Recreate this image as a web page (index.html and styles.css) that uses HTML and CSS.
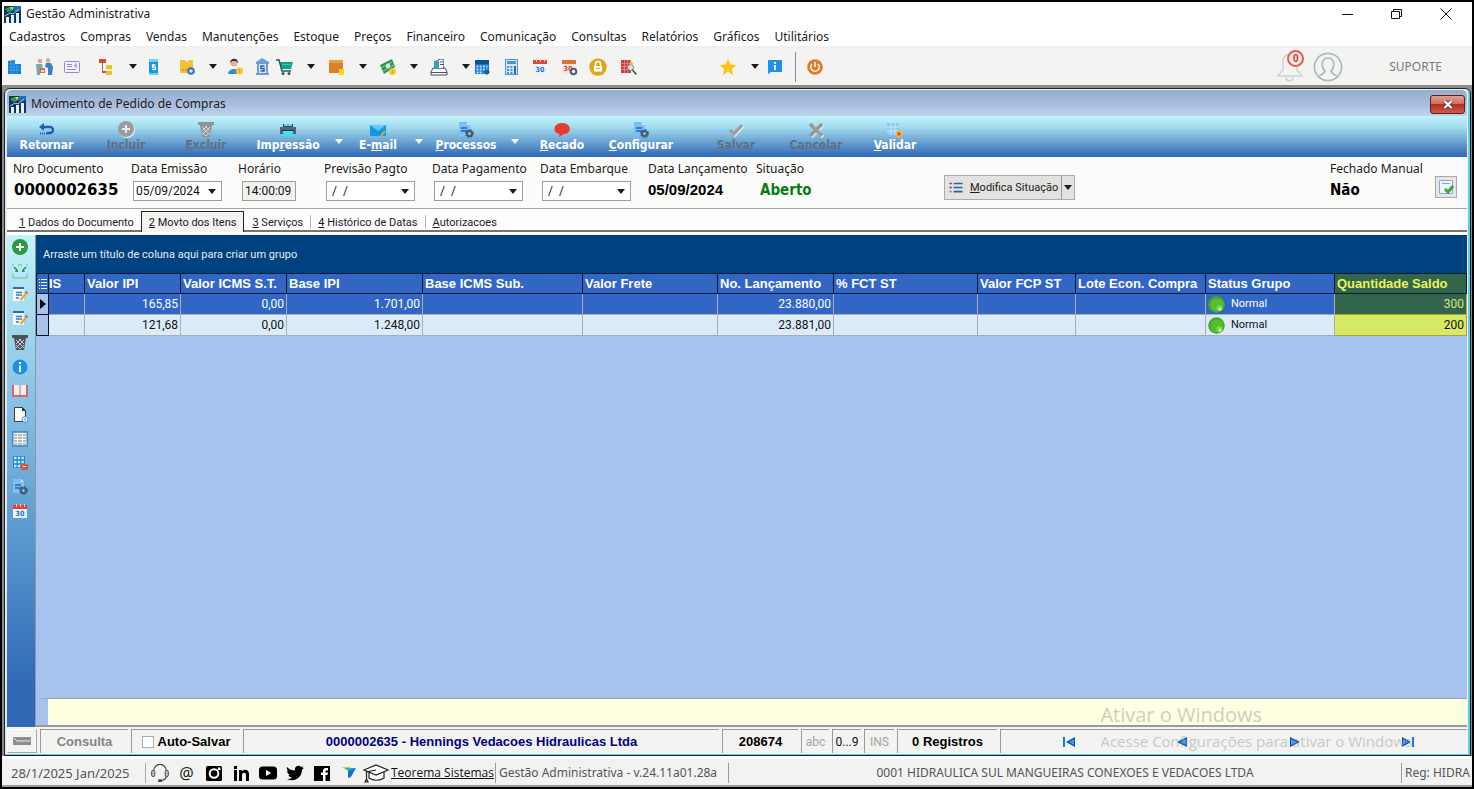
FILE: index.html
```html
<!DOCTYPE html>
<html lang="pt-BR">
<head>
<meta charset="utf-8">
<title>Gestão Administrativa</title>
<link rel="stylesheet" href="styles.css">
</head>
<body>
<svg class="defs" aria-hidden="true">
  <symbol id="logo" viewBox="0 0 17 17"><path fill="#12335c" d="M0 0h17v17H0z"/><path fill="#2f9e3c" d="M1 3l4-2 5 1-2 3-4 1z"/><path fill="#d8e34a" d="M6 1l4 0-2 3z"/><path fill="#1c6fb8" d="M10 0h7v4l-4 2-4-1z"/><path fill="#e8f2fa" d="M2 11h3v6H2zM7 9h3v8H7zM12 7h3v10h-3z"/><path fill="none" stroke="#9fd0f0" d="M1 10l5-3 3 1 6-5"/></symbol>
  <symbol id="caret" viewBox="0 0 8 5"><path fill="currentColor" d="M0 0h8L4 5z"/></symbol>
  <symbol id="docgear" viewBox="0 0 16 16"><path fill="#7cc0f7" d="M1 0h8l3 3v11H1z"/><path fill="#d5ecfd" d="M9 0l3 3H9z"/><path stroke="#1b66b5" stroke-width="1.4" d="M3 6h6M3 9h6"/><circle cx="11.5" cy="11.5" r="2.6" fill="none" stroke="#47596a" stroke-width="2"/><circle cx="11.5" cy="11.5" r="3.8" fill="none" stroke="#47596a" stroke-width="1.4" stroke-dasharray="1.5 1.5"/></symbol>
  <symbol id="note" viewBox="0 0 16 16"><path fill="#f1f8fd" d="M1 1h11v13H1z"/><path fill="#2c6da8" d="M1 0h11v2H1z"/><path stroke="#3f7fb5" stroke-width="1.6" d="M4 5.500h6M4 8h6M4 11h3"/><path stroke="#e8a93a" stroke-width="2.400" d="M14.500 6l-6 7"/><path fill="#c8553d" d="M13 5.500l1.500-1.500 1.500 1.300-1.300 1.700z"/></symbol>
  <symbol id="bin" viewBox="0 0 16 16"><path fill="currentColor" d="M0 0h16v3H0z"/><path fill="currentColor" d="M2 3h12l-2 12H4z"/><path stroke="#dfe6ea" stroke-width=".8" d="M4 5l8 8M12 5l-8 8M7 4l5 5M9 4L4 9M8 14l4-4M8 14L4 10"/></symbol>
  <symbol id="ball" viewBox="0 0 17 17"><circle cx="8.500" cy="8.500" r="8.300" fill="#45a92c"/><circle cx="9" cy="9" r="6.500" fill="#56bd31"/><circle cx="11.500" cy="12" r="3" fill="#7fd653"/><circle cx="12" cy="13" r="1.500" fill="#c9f5a4"/></symbol>
  <symbol id="play" viewBox="0 0 12 10"><path fill="#0a4fae" d="M1 0l10 5-10 5z"/><path fill="#3c9df0" d="M2 2l6 3-6 3z"/></symbol>
</svg>

<div class="app">
  <header class="titlebar">
    <svg class="logo"><use href="#logo"/></svg>
    <h1 class="app-name">Gestão Administrativa</h1>
    <div class="window-controls">
      <button aria-label="Minimizar"><svg viewBox="0 0 12 12"><path stroke="#111" d="M0 6.500h11"/></svg></button>
      <button aria-label="Restaurar"><svg viewBox="0 0 12 12"><path fill="none" stroke="#111" d="M.5 3.500h8v7h-8zM2.500 3.500v-2h8v7h-2"/></svg></button>
      <button aria-label="Fechar"><svg viewBox="0 0 12 12"><path stroke="#111" d="M.5.5l11 11M11.500.5l-11 11"/></svg></button>
    </div>
  </header>

  <nav class="menu">
    <a href="#">Cadastros</a><a href="#">Compras</a><a href="#">Vendas</a><a href="#">Manutenções</a><a href="#">Estoque</a><a href="#">Preços</a><a href="#">Financeiro</a><a href="#">Comunicação</a><a href="#">Consultas</a><a href="#">Relatórios</a><a href="#">Gráficos</a><a href="#">Utilitários</a>
  </nav>

  <div class="toolbar">
    <div class="tools">
      <button aria-label="Empresas"><svg viewBox="0 0 18 18"><path fill="#1579d4" d="M3 3l7-1v4h6v10H3z"/><path stroke="#4cb7f4" stroke-width=".7" d="M3 6h7M3 9h13M3 12h13M6 3v13M9 3v13M12 6v10"/></svg></button>
      <button aria-label="Clientes"><svg viewBox="0 0 18 18"><circle cx="5" cy="3" r="2.300" fill="#d9a98a"/><circle cx="13" cy="2.500" r="2.300" fill="#d9a98a"/><path fill="#79a8a0" d="M1 6h6l1 3-2 1-1 7H2z"/><path fill="#3f80c4" d="M11 5h5l2 4-1 8h-4V10l-3-1z"/><path fill="#d66a4a" d="M5 10h5v5H5z"/><path fill="#f5d9c8" d="M6 12h3v2H6z"/></svg></button>
      <button aria-label="Condições"><svg viewBox="0 0 18 18"><rect x="1.500" y="3.500" width="15" height="11" rx="1" fill="#f4f2fd" stroke="#8f8ad2"/><path stroke="#8f8ad2" d="M4 6.500h5M4 8.500h5M4 11.500h9M13 5v5M11 7.500h3"/></svg></button>
      <button aria-label="Hierarquia"><svg viewBox="0 0 18 18"><path fill="#d84a32" d="M2 1h7v4H2z"/><path fill="#f2c01c" d="M9 7h6v4H9zM9 13h6v4H9z"/><path fill="none" stroke="#777" d="M5.500 5v9.500H9"/><path stroke="#d84a32" stroke-width="2" d="M5 14h4"/></svg></button>
      <button class="drop" aria-label="Mais opções"><svg><use href="#caret"/></svg></button>
      <button aria-label="Tabela de preço"><svg viewBox="0 0 18 18"><path fill="#1596e0" d="M5 1h9v16H5z"/><path fill="#6cd0f7" d="M5 1h9v3H5zM5 15h9v2H5z"/><path fill="none" stroke="#fff" stroke-width="1.300" d="M11.500 7h-3v2.200h3v2.300h-3.500"/></svg></button>
      <button aria-label="Produtos"><svg viewBox="0 0 18 18"><path fill="#f2c232" d="M2 2h5l2 2 2-2h4v13H2z"/><path stroke="#b48316" d="M4 12h2M7 12h2"/><circle cx="13" cy="13" r="2.800" fill="#dbe8f5" stroke="#3f6fa8" stroke-width="2"/></svg></button>
      <button class="drop" aria-label="Mais opções"><svg><use href="#caret"/></svg></button>
      <button aria-label="Vendedor"><svg viewBox="0 0 18 18"><circle cx="8" cy="5" r="3.500" fill="#e9b088"/><path fill="#2b2b2b" d="M4 5c0-5 8-6 8 0l-2-2H6z"/><path fill="#2f8ad8" d="M2 16c0-6 12-7 12 0z"/><circle cx="13.500" cy="13" r="3.500" fill="#f6c637"/><path stroke="#e0a622" d="M13.500 11v4"/></svg></button>
      <button aria-label="Banco"><svg viewBox="0 0 18 18"><path fill="#6f9ddb" d="M9 0l7 4v2h-1v9h1v2H3v-2h1V6H3V4z"/><path fill="#d8e8fb" d="M6 6h7v9H6z"/><path fill="none" stroke="#2a5fb5" stroke-width="1.500" d="M11.500 8H8v2.500h3V13H7.500"/></svg></button>
      <button aria-label="Compras"><svg viewBox="0 0 18 18"><path fill="#16a08c" d="M3 4h14l-2 7H6z"/><path fill="none" stroke="#27585c" stroke-width="1.500" d="M0 2h3l3 11h9"/><path stroke="#3fbfae" d="M6 6.500h9"/><circle cx="7" cy="15.500" r="1.500" fill="#27585c"/><circle cx="13" cy="15.500" r="1.500" fill="#27585c"/></svg></button>
      <button class="drop" aria-label="Mais opções"><svg><use href="#caret"/></svg></button>
      <button aria-label="Estoque"><svg viewBox="0 0 18 18"><path fill="#dc7f2c" d="M2 2h14v13H2z"/><path fill="#f0a04c" d="M2 2h14v3H2z"/><path fill="#fbd324" d="M12 11h5v6h-5z"/></svg></button>
      <button class="drop" aria-label="Mais opções"><svg><use href="#caret"/></svg></button>
      <button aria-label="Financeiro"><svg viewBox="0 0 18 18"><path fill="#2d9650" d="M1 7l12-6 3 8-11 7z"/><path stroke="#8fd0a2" stroke-width="1" d="M2 10l11-6M4 13l11-6"/><circle cx="9" cy="8" r="2.400" fill="#c9ecd2"/><circle cx="13.500" cy="13.500" r="3.500" fill="#f6c637"/><path stroke="#e0a622" d="M13.500 12v3"/></svg></button>
      <button class="drop" aria-label="Mais opções"><svg><use href="#caret"/></svg></button>
      <button aria-label="Nota fiscal"><svg viewBox="0 0 18 18"><path fill="#f8fafc" stroke="#3d4a5c" d="M3 10l-2 4v3h16v-3l-2-4z"/><path fill="#2c9fd4" d="M4 3l4-1v9H4z"/><path fill="#fff" stroke="#4b5261" stroke-dasharray="2 1" d="M8.500 1.500h5v9h-5z"/><path stroke="#4b5261" d="M10 4h3M10 6.500h3M1 14.500h16"/></svg></button>
      <button class="drop" aria-label="Mais opções"><svg><use href="#caret"/></svg></button>
      <button aria-label="Agenda"><svg viewBox="0 0 18 18"><path fill="#1c75cc" d="M2 2h14v14H2z"/><path fill="#0c4f9b" d="M2 2h14v4H2z"/><path stroke="#bfe2fb" stroke-width="2" stroke-dasharray="2 1.200" d="M3.500 8.500h11M3.500 11.500h11M3.500 14.500h7"/><path fill="#0e6a9c" d="M10 14l4-3 3 3-3 3z"/></svg></button>
      <button aria-label="Calculadora"><svg viewBox="0 0 18 18"><rect x="3.500" y="1.500" width="12" height="15" fill="#cfe8f8" stroke="#4c97cb"/><path fill="#4c97cb" d="M5 3h9v3H5z"/><path stroke="#4c97cb" stroke-width="2" stroke-dasharray="2 1.500" d="M5 9h6M5 12h6M5 15h6"/><path fill="#1f6ab0" d="M12 8h2v8h-2z"/></svg></button>
      <button aria-label="Calendário"><svg viewBox="0 0 18 18"><path fill="#e9f2fc" d="M2 6h14v10H2z"/><path fill="#e0433a" d="M2 2h14v4H2z"/><path fill="#f7c2bd" d="M5 1h1v3H5zM9 1h1v3H9zM13 1h1v3h-1z"/><text x="9" y="14" text-anchor="middle" class="cal-num" fill="#1f6fcc">30</text></svg></button>
      <button aria-label="Configurar calendário"><svg viewBox="0 0 18 18"><path fill="#f4e8e2" d="M2 6h14v10H2z"/><path fill="#de7034" d="M2 2h14v4H2z"/><text x="8" y="13" text-anchor="middle" class="cal-num" fill="#d0463a">30</text><circle cx="13.500" cy="13.500" r="2.800" fill="#eee" stroke="#50606e" stroke-width="2"/></svg></button>
      <button aria-label="Permissões"><svg viewBox="0 0 18 18"><circle cx="9" cy="9" r="8.700" fill="#e0a61c"/><rect x="5" y="8" width="8" height="5.500" fill="#fff"/><path fill="none" stroke="#fff" stroke-width="1.500" d="M6.500 8V6a2.500 2.500 0 015 0v2"/><path stroke="#e0a61c" d="M7 10.500h4"/></svg></button>
      <button aria-label="Consulta"><svg viewBox="0 0 18 18"><path fill="#d23a3f" d="M2 2h10v13H2z"/><path stroke="#f0938f" stroke-width=".7" d="M2 5.500h10M2 8.500h10M2 11.500h10M5.500 2v13M8.500 2v13"/><circle cx="11.500" cy="9.500" r="3" fill="#dbe9f6" stroke="#56779b"/><path fill="#f3b93e" d="M11 2l3 3v3h-3z"/><path stroke="#444" stroke-width="1.500" d="M13.500 12l4 4.500"/></svg></button>
      <button aria-label="Favoritos"><svg viewBox="0 0 18 18"><path fill="#fcc418" d="M9 1l2.400 5.500 6 .5-4.500 4 1.400 6L9 13.800 3.700 17l1.400-6L.6 7l6-.5z"/></svg></button>
      <button class="drop" aria-label="Mais favoritos"><svg><use href="#caret"/></svg></button>
      <button aria-label="Informações"><svg viewBox="0 0 18 18"><path fill="#1e90ee" d="M2 2h14v12H5l-3 2z"/><path fill="#fff" d="M8 4h2v2H8zM8 7h2v5H8z"/></svg></button>
      <span class="divider"></span>
      <button aria-label="Sair"><svg viewBox="0 0 18 18"><circle cx="9" cy="9" r="7.800" fill="#df7c26"/><path fill="none" stroke="#fff" stroke-width="1.500" d="M6 6a4.200 4.200 0 106 0M9 4v5"/></svg></button>
    </div>
    <div class="account">
      <button class="bell" aria-label="Notificações"><svg viewBox="0 0 28 32"><path fill="none" stroke="#cfd1d1" stroke-width="1.500" d="M2 25h24l-5-6v-9c0-9-14-9-14 0v9zM10 26c0 5 7 5 7 0"/></svg><span class="badge">0</span></button>
      <button class="avatar" aria-label="Usuário"><svg viewBox="0 0 30 30"><g fill="none" stroke="#abbac0" stroke-width="1.700"><circle cx="15" cy="15" r="13.600"/><path d="M6 25c1-3 6-3 6-6-4-4-4-13 3-13s7 9 3 13c0 3 5 3 6 6"/></g></svg></button>
      <span>SUPORTE</span>
    </div>
  </div>

  <main class="mdi">
    <section class="win">
      <header class="win-title">
        <svg class="logo"><use href="#logo"/></svg>
        <h2>Movimento de Pedido de Compras</h2>
        <button class="win-close" aria-label="Fechar janela"><svg viewBox="0 0 12 10"><path stroke="#56333a" stroke-width="4" d="M2 1l8 8M10 1L2 9"/><path stroke="#fff" stroke-width="2.400" d="M2 1l8 8M10 1L2 9"/></svg></button>
      </header>

      <div class="actions">
        <button><svg viewBox="0 0 16 16"><path fill="none" stroke="#1b5fbd" stroke-width="2.400" d="M4 5h7a3 3 0 010 6H8"/><path fill="#1b5fbd" d="M0 5l5-4v8z"/><path stroke="#1b5fbd" stroke-dasharray="1 1" stroke-width="2" d="M1 11.500h7"/></svg>Retornar</button>
        <button disabled class="add-off"><svg viewBox="0 0 18 18"><circle cx="10" cy="10" r="8" fill="#eaf4fa"/><circle cx="9" cy="9" r="8" fill="#9a9c9e"/><path stroke="#e6eef2" stroke-width="2" d="M9 5v8M5 9h8"/></svg><span><u>I</u>ncluir</span></button>
        <button disabled class="bin-off"><svg><use href="#bin"/></svg><span><u>E</u>xcluir</span></button>
        <button><svg viewBox="0 0 16 16"><path fill="#3c4652" d="M3 2h10v3H3z"/><path fill="#4e6478" d="M0 5h16v7H0z"/><path fill="#3fe0f5" d="M3 9h10v5H3zM4 2h8v2H4z"/><path fill="#28323c" d="M2 8h12v1H2z"/></svg><span>Imp<u>r</u>essão</span></button>
        <button class="drop" aria-label="Opções de impressão"><svg><use href="#caret"/></svg></button>
        <button><svg viewBox="0 0 16 16"><path fill="#1299e3" d="M0 3h16v11H0z"/><path fill="#5ccdf7" d="M0 3h16L8 9z"/><path stroke="#e5aa25" stroke-width="2" d="M15 9l-4 5"/></svg><span>E-<u>m</u>ail</span></button>
        <button class="drop" aria-label="Opções de e-mail"><svg><use href="#caret"/></svg></button>
        <button><svg><use href="#docgear"/></svg><span><u>P</u>rocessos</span></button>
        <button class="drop" aria-label="Opções de processos"><svg><use href="#caret"/></svg></button>
        <button><svg viewBox="0 0 16 16"><path fill="#e8392e" d="M8 1c10 0 10 11 2 11l-5 3 .5-3C-2 11-1 1 8 1z"/></svg><span><u>R</u>ecado</span></button>
        <button><svg><use href="#docgear"/></svg><span><u>C</u>onfigurar</span></button>
        <button disabled><svg viewBox="0 0 16 16"><path fill="none" stroke="#e6eef4" stroke-width="3" d="M3 9l4 4 8-9"/><path fill="none" stroke="#9a9c9e" stroke-width="3" d="M2 8l4 4 8-9"/></svg><span><u>S</u>alvar</span></button>
        <button disabled><svg viewBox="0 0 16 16"><path stroke="#e6eef4" stroke-width="3.500" d="M3 3l12 12M15 3L3 15"/><path stroke="#96989a" stroke-width="3.500" d="M2 2l12 12M14 2L2 14"/></svg><span>Cancelar</span></button>
        <button><svg viewBox="0 0 16 16"><path fill="#8ec8f5" d="M0 1h12v12H0z"/><path stroke="#c9e8fc" d="M0 5h12M0 9h12M4 1v12M8 1v12"/><circle cx="12" cy="12" r="2.600" fill="#e04a34" stroke="#f6b52c" stroke-width="1.800"/></svg><span><u>V</u>alidar</span></button>
      </div>

      <form class="order">
        <div class="field"><span class="label">Nro Documento</span><output class="number">0000002635</output></div>
        <div class="field"><label for="emissao">Data Emissão</label><div class="combo"><select id="emissao"><option>05/09/2024</option></select><svg><use href="#caret"/></svg></div></div>
        <div class="field"><label for="hora">Horário</label><input id="hora" class="time" value="14:00:09" readonly></div>
        <div class="field"><label for="previsao">Previsão Pagto</label><div class="combo"><select id="previsao"><option>&nbsp;/ &nbsp;/</option></select><svg><use href="#caret"/></svg></div></div>
        <div class="field"><label for="pagamento">Data Pagamento</label><div class="combo"><select id="pagamento"><option>&nbsp;/ &nbsp;/</option></select><svg><use href="#caret"/></svg></div></div>
        <div class="field"><label for="embarque">Data Embarque</label><div class="combo"><select id="embarque"><option>&nbsp;/ &nbsp;/</option></select><svg><use href="#caret"/></svg></div></div>
        <div class="field"><span class="label">Data Lançamento</span><output class="launch">05/09/2024</output></div>
        <div class="field"><span class="label">Situação</span><output class="status">Aberto</output></div>
        <div class="split">
          <button type="button"><svg viewBox="0 0 16 16"><path stroke="#2c5f9e" stroke-width="2" d="M5 3h11M5 8h11M5 13h11"/><path stroke="#b5393d" stroke-width="2" d="M0 3h3M0 8h3"/><path stroke="#5aa0dc" stroke-width="2" d="M0 13h3"/></svg><span><u>M</u>odifica Situação</span></button>
          <button type="button" class="split-drop" aria-label="Opções de situação"><svg><use href="#caret"/></svg></button>
        </div>
        <div class="field"><span class="label">Fechado Manual</span><output class="closed">Não</output></div>
        <button type="button" class="check" aria-label="Fechar manualmente"><svg viewBox="0 0 16 16"><path fill="#eef5fc" stroke="#86a9d0" d="M1.500 1.500h13v13h-13z"/><path stroke="#86a9d0" d="M4 4.500h8"/><path fill="none" stroke="#3fa63a" stroke-width="3" d="M7 10l3 3 5-6"/></svg></button>
      </form>

      <nav class="tabs">
        <button><u>1</u> Dados do Documento</button><button class="active"><u>2</u> Movto dos Itens</button><button><u>3</u> Serviços</button><button><u>4</u> Histórico de Datas</button><button><u>A</u>utorizacoes</button>
      </nav>

      <div class="workspace">
        <aside class="side">
          <button aria-label="Adicionar"><svg viewBox="0 0 16 16"><circle cx="8" cy="8" r="8" fill="#2c9a44"/><path stroke="#fff" stroke-width="2" d="M8 4v8M4 8h8"/></svg></button>
          <button aria-label="Ratear"><svg viewBox="0 0 16 16"><path fill="none" stroke="#6fbf7c" d="M1 11v4h14v-4M1 3V1M15 3V1M6 2h4"/><path fill="#219a38" d="M1 4h2l3 3v2H3l1-2zM15 4h-2l-3 3v2h3l-1-2z"/></svg></button>
          <button aria-label="Editar item"><svg><use href="#note"/></svg></button>
          <button aria-label="Editar observação"><svg><use href="#note"/></svg></button>
          <button aria-label="Excluir item" class="bin"><svg><use href="#bin"/></svg></button>
          <button aria-label="Informações"><svg viewBox="0 0 16 16"><circle cx="8" cy="8" r="7.500" fill="#1c91e4"/><path fill="#fff" d="M7 3h2v2H7zM7 6.500h2V13H7z"/></svg></button>
          <button aria-label="Catálogo"><svg viewBox="0 0 16 16"><path fill="#d06a6c" d="M0 2h16v12H0z"/><path fill="#f2eff0" d="M2 2h5.500v10H2zM8.500 2H14v10H8.500z"/></svg></button>
          <button aria-label="Novo documento"><svg viewBox="0 0 16 16"><path fill="#fff" stroke="#333d46" d="M2.500.5h8l3 3v11h-11z"/><path fill="#333d46" d="M10 0l4 4h-4z"/><circle cx="13" cy="12.500" r="3" fill="#e8f5fd" stroke="#3391d0"/><path stroke="#3391d0" d="M13 11v3"/></svg></button>
          <button aria-label="Colunas"><svg viewBox="0 0 16 16"><path fill="#f7f7f5" stroke="#3888be" stroke-width="1.500" d="M.7 1h14.600v14H.7z"/><path stroke="#a5a7a8" stroke-width="1.400" d="M2 4h12M2 7h12M2 10h12M2 13h12"/><path stroke="#fff" d="M5.500 2v12M10.500 2v12"/></svg></button>
          <button aria-label="Salvar grade"><svg viewBox="0 0 16 16"><path fill="#1e85cf" d="M1 1h12v12H1z"/><path stroke="#c3e7fb" stroke-width="2.400" stroke-dasharray="2.500 1.200" d="M2 3h11M2 7h11M2 11h7"/><path fill="#d8563b" d="M9 9h7v6H9z"/><path fill="#fff" d="M11 11h3v1h-3z"/></svg></button>
          <button aria-label="Configurar documento"><svg><use href="#docgear"/></svg></button>
          <button aria-label="Datas"><svg viewBox="0 0 16 16"><path fill="#e9f2fc" d="M1 5h14v10H1z"/><path fill="#e0433a" d="M1 2h14v4H1z"/><path fill="#f7c2bd" d="M4 1h1v3H4zM8 1h1v3H8zM12 1h1v3h-1z"/><text x="8" y="13" text-anchor="middle" class="cal-num" fill="#1f6fcc">30</text></svg></button>
        </aside>

        <div class="grid">
          <p class="group-bar">Arraste um título de coluna aqui para criar um grupo</p>
          <table>
            <colgroup><col class="c-mark"><col class="c-s"><col class="c-ipi"><col class="c-icms"><col class="c-base"><col class="c-sub"><col class="c-frete"><col class="c-lanc"><col class="c-fct"><col class="c-fcp"><col class="c-lote"><col class="c-status"><col></colgroup>
            <thead><tr><th class="mark"><svg viewBox="0 0 8 12"><path stroke="#fff" d="M0 1.500h1M2 1.500h6M0 4.500h1M2 4.500h6M0 7.500h1M2 7.500h6M0 10.500h1M2 10.500h6"/></svg></th><th class="tight">IS</th><th>Valor IPI</th><th>Valor ICMS S.T.</th><th>Base IPI</th><th>Base ICMS Sub.</th><th>Valor Frete</th><th>No. Lançamento</th><th>% FCT ST</th><th>Valor FCP ST</th><th>Lote Econ. Compra</th><th>Status Grupo</th><th class="qty">Quantidade Saldo</th></tr></thead>
            <tbody>
              <tr class="selected"><td class="mark"><svg viewBox="0 0 6 10"><path d="M0 0l6 5-6 5z"/></svg></td><td></td><td>165,85</td><td>0,00</td><td>1.701,00</td><td></td><td></td><td>23.880,00</td><td></td><td></td><td></td><td class="state"><svg><use href="#ball"/></svg>Normal</td><td class="qty">300</td></tr>
              <tr><td class="mark"></td><td></td><td>121,68</td><td>0,00</td><td>1.248,00</td><td></td><td></td><td>23.881,00</td><td></td><td></td><td></td><td class="state"><svg><use href="#ball"/></svg>Normal</td><td class="qty">200</td></tr>
            </tbody>
          </table>
          <div class="grid-footer"></div>
        </div>
      </div>

      <footer class="win-status">
        <span class="cell raised"><svg viewBox="0 0 18 8"><path fill="#8d8d8d" d="M0 0h18v8H0z"/><path fill="none" stroke="#ececec" d="M1 1l3 3h13"/></svg></span>
        <span class="cell muted">Consulta</span>
        <label class="cell auto"><input type="checkbox">Auto-Salvar</label>
        <span class="cell customer">0000002635 - Hennings Vedacoes Hidraulicas Ltda</span>
        <span class="cell">208674</span>
        <span class="cell key">abc</span>
        <span class="cell key on">0...9</span>
        <span class="cell key">INS</span>
        <span class="cell">0 Registros</span>
        <div class="cell pager">
          <button aria-label="Primeiro"><svg viewBox="0 0 12 10"><path fill="#1379e0" d="M0 0h2v10H0z"/><path fill="#0a4fae" d="M12 0L3 5l9 5z"/><path fill="#3c9df0" d="M11 2L6 5l5 3z"/></svg></button>
          <button aria-label="Anterior"><svg class="flip"><use href="#play"/></svg></button>
          <button aria-label="Próximo"><svg><use href="#play"/></svg></button>
          <button aria-label="Último"><svg class="flip" viewBox="0 0 12 10"><path fill="#1379e0" d="M0 0h2v10H0z"/><path fill="#0a4fae" d="M12 0L3 5l9 5z"/><path fill="#3c9df0" d="M11 2L6 5l5 3z"/></svg></button>
        </div>
      </footer>
      <div class="activation"><strong>Ativar o Windows</strong><span>Acesse Configurações para ativar o Windows.</span></div>
    </section>
  </main>

  <footer class="statusbar">
    <span class="today">28/1/2025 Jan/2025</span>
    <div class="social">
      <a href="#" aria-label="Suporte"><svg viewBox="0 0 20 20"><path fill="none" stroke="#444" stroke-width="1.300" d="M3 8C3-2 17-2 17 8M17 13c0 4-3 5-6 5.500"/><rect x=".7" y="7" width="3.500" height="7" rx="1.500" fill="#bbb" stroke="#444"/><rect x="15.800" y="7" width="3.500" height="7" rx="1.500" fill="#bbb" stroke="#444"/><path fill="#444" d="M8 17h4v3H8z"/></svg></a>
      <a href="#" class="at">@</a>
      <a href="#" aria-label="Instagram"><svg viewBox="0 0 18 18"><rect x="1" y="2" width="16" height="15" rx="1.500"/><circle cx="9" cy="9.500" r="4.300" fill="none" stroke="#fff" stroke-width="2"/><path fill="#fff" d="M13 3.500h2.500V6H13z"/></svg></a>
      <a href="#" aria-label="LinkedIn"><svg viewBox="0 0 18 18"><path d="M2 6h3v11H2zM2 2h3v3H2zM7 6h3v1.500c1.500-2.500 7-2.500 7 2.500v7h-3v-6c0-3-4-3-4 0v6H7z"/></svg></a>
      <a href="#" aria-label="YouTube"><svg viewBox="0 0 18 18"><rect y="2.500" width="18" height="13" rx="3.500"/><path fill="#fff" d="M7 6l5 3-5 3z"/></svg></a>
      <a href="#" aria-label="Twitter"><svg viewBox="0 0 18 18"><path d="M1 3c2 2.500 5 3.500 8 3.500C8 2 13 .5 15 3l2.500-.8-1.500 2 2-.4-2 2C16 14 8 18.500 1 15c2 0 4-.3 5-1.500-2 0-3-1-3.500-2.500h1.500C2 10 1 8.500 1 7l1.500.5C1 6 .5 4.500 1 3z"/></svg></a>
      <a href="#" aria-label="Facebook"><svg viewBox="0 0 18 18"><path d="M1 2h16v15H1z"/><path fill="#fff" d="M10 17v-6H8V8.500h2V7c0-2.500 1.500-3 5-3v2.500h-1.500c-.8 0-1 .3-1 1v1H15l-.5 2.500h-2v6z"/></svg></a>
      <a href="#" aria-label="Teorema"><svg viewBox="0 0 18 18"><path fill="#a9dc2b" d="M2 3h9L8 7z"/><path fill="#17b3c7" d="M5 4l11 0-6 4z"/><path fill="#1a6fd6" d="M16 4l-5 9-3 1V7z"/></svg></a>
      <a href="#" aria-label="Treinamento"><svg class="cap" viewBox="0 0 26 20"><path fill="#fff" stroke="#222" stroke-width="1.200" d="M6 9v6c4 3 11 3 15 0V9"/><path fill="#fff" stroke="#222" stroke-width="1.200" d="M1 7l12-5 12 5-12 5z"/><path fill="none" stroke="#222" stroke-width="1.200" d="M13 7L3.500 9v8M2 19l1.500-3L5 19z"/></svg></a>
    </div>
    <a class="brand" href="#">Teorema Sistemas</a>
    <span class="version">Gestão Administrativa - v.24.11a01.28a</span>
    <span class="company">0001 HIDRAULICA SUL MANGUEIRAS CONEXOES E VEDACOES LTDA</span>
    <span class="license">Reg: HIDRA</span>
  </footer>
</div>
</body>
</html>
```
FILE: styles.css
```css
* { box-sizing: border-box; }

:root {
  --ui: "Noto Sans", "Open Sans", sans-serif;
  --sans: Roboto, "Liberation Sans", sans-serif;
  --bold: "Liberation Sans", Arial, sans-serif;
  --wide: "DejaVu Sans Condensed", "DejaVu Sans", sans-serif;
}

body {
  margin: 0;
  background: #000;
  font: 12px/16px var(--ui);
  color: #1b1b1b;
}

button {
  padding: 0;
  border: 0;
  background: none;
  font: inherit;
  color: inherit;
}

h1, h2, p { margin: 0; font-size: 12px; font-weight: 400; }
a { color: inherit; text-decoration: none; }
svg { display: block; flex: none; }
.defs { position: absolute; width: 0; height: 0; }
.cal-num { font: bold 7px var(--wide); }
.logo { width: 17px; height: 17px; }

.app {
  display: flex;
  flex-direction: column;
  min-height: 100vh;
  border: 2px solid #000;
  background: #fff;
  overflow: hidden;
}

/* Title and menu */
.titlebar { display: flex; align-items: center; gap: 5px; height: 24px; padding: 0 20px 0 2px; }
.window-controls { display: flex; gap: 37px; margin-left: auto; }
.window-controls svg { width: 12px; height: 12px; }
.menu { display: flex; gap: 15px; height: 20px; padding: 3px 7px 0; }

/* Main toolbar */
.toolbar {
  display: flex;
  align-items: center;
  justify-content: space-between;
  height: 39px;
  padding: 0 30px 0 3px;
  border-top: 2px solid #f0f0ef;
  background: #f3f3f2;
}
.tools {
  display: grid;
  align-items: center;
  grid-template-columns: 30px 28px 34px 32px 15px 34px 31px 17px 27px 23px 31px 20px 32px 20px 31px 20px 32px 11px 29px 29px 29px 29px 30px 100px 32px 15px 29px 11px 18px;
}
.tools svg { width: 18px; height: 18px; }
.tools .drop svg, .combo svg, .split-drop svg, .actions .drop svg { width: 8px; height: 5px; }
.divider { width: 1px; height: 30px; background: #8d8d8d; }
.account { display: flex; align-items: center; color: #76797c; }
.bell { position: relative; margin-right: 9px; }
.bell svg { width: 28px; height: 32px; }
.badge {
  position: absolute;
  top: -1px;
  right: 0;
  width: 17px;
  height: 17px;
  border: 2px solid #dd6057;
  border-radius: 50%;
  background: #f8ebe4;
  font: bold 10px/13px var(--bold);
  color: #d32a20;
}
.avatar { margin-right: 46px; }
.avatar svg { width: 30px; height: 30px; }

/* Child window */
.mdi {
  display: flex;
  flex: 1;
  padding: 3px 1px 0 2px;
  background: #8a8a8a;
}
.win {
  position: relative;
  display: flex;
  flex: 1;
  flex-direction: column;
  min-width: 0;
  border: 1px solid #1d2326;
  border-radius: 6px 6px 0 0;
  background: #f3f3f2;
  box-shadow: inset -2px -1px #62cdea, inset 2px 0 #dfe9f2;
  padding: 1px 3px 2px 2px;
}
.win-title {
  display: flex;
  align-items: center;
  gap: 5px;
  height: 26px;
  padding: 2px 2px 0;
  border-radius: 5px 5px 0 0;
  background: linear-gradient(#93aecb, #a9bfe2 60%, #bdd5ea);
}
.win-close {
  display: grid;
  place-items: center;
  width: 35px;
  height: 19px;
  margin-left: auto;
  border: 1px solid #5c1c1c;
  border-radius: 3px;
  background: linear-gradient(#dfa092, #cf6f60 45%, #b32e20 50%, #d05c48);
}
.win-close svg { width: 12px; height: 9px; }

.actions {
  display: grid;
  grid-template-columns: 79px 80px 80px 84px 18px 60px 22px 72px 26px 68px 90px 100px 60px 98px;
  height: 41px;
  background: linear-gradient(#c2f3fd, #a6def0 25%, #2f67b5);
  font: bold 12px/15px var(--wide);
  color: #fff;
}
.actions button {
  display: flex;
  flex-direction: column;
  align-items: center;
  justify-content: flex-end;
  padding-bottom: 4px;
}
.actions svg { width: 16px; height: 16px; }
.actions .add-off svg { width: 18px; height: 18px; }
.actions .drop { padding-bottom: 13px; }
.actions button:disabled { color: #62707e; }
.actions .bin-off svg { color: #8f9394; }

/* Order header */
.order {
  display: grid;
  grid-template-columns: 118px 107px 86px 108px 108px 108px 108px 188px 1fr 105px 30px;
  height: 52px;
  padding: 4px 2px 0 6px;
  border-bottom: 1px solid #a5a5a5;
  background: #fbfbfa;
}
.field { display: flex; flex-direction: column; gap: 3px; align-items: flex-start; white-space: nowrap; }
.combo { position: relative; }
.combo select, .time {
  height: 20px;
  margin: 1px 0 0 2px;
  padding: 0 2px;
  border: 1px solid #9d9d9d;
  border-radius: 0;
  appearance: none;
  background: #fff;
  font: 12px/16px var(--sans);
  color: #111;
}
.combo select { width: 89px; }
.combo svg { position: absolute; right: 6px; top: 9px; pointer-events: none; }
.time { width: 54px; margin-left: 4px; background: #f1f1f0; }
.number { padding-left: 1px; font: bold 15px/20px "DejaVu Sans", sans-serif; color: #000; }
.launch { font: bold 15px/20px var(--bold); color: #000; }
.status { padding-left: 4px; font: bold 15px/20px var(--wide); color: #0c7c14; }
.closed { font: bold 15px/20px var(--wide); color: #000; }
.split {
  display: flex;
  justify-self: start;
  height: 25px;
  margin-top: 14px;
  border: 1px solid #ababab;
  background: #e2e2e1;
  font: 11px/16px var(--sans);
}
.split button { display: flex; align-items: center; gap: 6px; padding: 0 3px; }
.split button svg { width: 16px; height: 13px; }
.split .split-drop { justify-content: center; padding: 0 2px; border-left: 1px solid #999; }
.split .split-drop svg { width: 8px; height: 5px; }
.check {
  display: grid;
  place-items: center;
  width: 22px;
  height: 22px;
  margin-top: 15px;
  border: 1px solid #a9a9a9;
  background: #e6e6e6;
}
.check svg { width: 16px; height: 16px; }

.tabs {
  display: flex;
  height: 26px;
  padding: 2px 0 0 4px;
  border-bottom: 3px solid #fff;
  background: linear-gradient(#757373, #757373) 0 100% / 100% 2px no-repeat #fdfdfd;
  font: 11px/16px var(--sans);
}
.tabs button { margin: 4px 0 3px; padding: 0 7px; border-left: 1px solid #b5b5b5; white-space: nowrap; line-height: 16px; }
.tabs button:first-child, .tabs .active + button { border-color: transparent; }
.tabs .active { margin: 0; padding-top: 2px; border: 1px solid #222; border-bottom: 0; background: #f3f3f2; }

/* Item grid */
.workspace { display: flex; flex: 1; }
.side {
  display: flex;
  flex-direction: column;
  align-items: center;
  gap: 8px;
  width: 28px;
  padding: 4px 2px 0 0;
  background: linear-gradient(#c2f3fd, #5b9ad0 60%, #3068b6 92%);
}
.side svg { width: 16px; height: 16px; }
.side .bin { color: #4d5356; }
.grid {
  display: flex;
  flex: 1;
  flex-direction: column;
  min-width: 0;
  border-left: 1px solid #8b97a5;
  border-bottom: 2px solid #9b9b98;
  background: #a5c3ec;
  font-family: var(--sans);
}
.group-bar { padding: 12px 7px 10px; background: #00427f; font-size: 11px; color: #e5edf4; }
table { width: 100%; border-collapse: collapse; table-layout: fixed; }
th, td { height: 21px; padding: 0 2px; border: 1px solid #a9aeb2; white-space: nowrap; overflow: hidden; }
th {
  height: 20px;
  border-color: #0c1a38;
  background: #3166c4;
  font: bold 13px/16px var(--bold);
  text-align: left;
  color: #fff;
}
td { background: #dbebf9; text-align: right; color: #111; }
.selected td { border-bottom: 1px dotted #b69a72; background: #3166c4; color: #fff; }
td.mark, .selected td.mark { border: 1px solid #111; background: #a5c3ec; }
.tight { padding: 0; }
.mark svg { width: 8px; height: 12px; }
td.mark svg { width: 6px; height: 10px; margin: 0 auto; }
td.state { font-size: 11px; text-align: left; }
.state svg { display: inline-block; width: 17px; height: 17px; margin-right: 6px; vertical-align: middle; }
td.qty { border-color: #b5a02d; background: #d8e963; }
th.qty { background: #31664c; color: #eef25c; }
.selected td.qty { background: #31664c; color: #d8e38a; }
.c-mark { width: 12px; } .c-s { width: 36px; } .c-ipi { width: 96px; } .c-icms { width: 106px; }
.c-base { width: 136px; } .c-sub { width: 160px; } .c-frete { width: 135px; } .c-lanc { width: 116px; }
.c-fct { width: 144px; } .c-fcp { width: 98px; } .c-lote { width: 130px; } .c-status { width: 129px; }
.grid-footer {
  height: 27px;
  margin-top: auto;
  border-top: 1px solid #999fa5;
  border-left: 12px solid #a5c3ec;
  background: #ffffe1;
}

/* Window status */
.win-status {
  display: grid;
  grid-template-columns: 30px 88px 109px 476px 76px 28px 29px 30px 100px 1fr;
  gap: 3px;
  padding-top: 2px;
  font: bold 13px/16px var(--bold);
  color: #000;
}
.cell {
  display: flex;
  align-items: center;
  justify-content: center;
  height: 24px;
  border-top: 1px solid #9a9a9a;
  border-left: 1px solid #9a9a9a;
  white-space: nowrap;
}
.raised { border: 1px solid #a5a5a5; border-top-color: #fff; border-left-color: #fff; }
.raised svg { width: 18px; height: 8px; }
.muted { color: #858585; }
.auto input { width: 12px; height: 12px; margin: 0 4px 0 0; appearance: none; border: 1px solid #aaa; background: #fff; }
.customer { color: #000080; }
.key { font: 12px/16px var(--sans); color: #a5a5a5; }
.on { color: #111; }
.pager { display: grid; grid-template-columns: repeat(4, 1fr); justify-items: center; padding: 0 2px 0 11px; }
.pager svg { width: 12px; height: 10px; }
.flip { transform: scaleX(-1); }
.activation {
  position: absolute;
  right: 54px;
  bottom: 4px;
  display: grid;
  gap: 4px;
  font: 15px/20px "Open Sans", sans-serif;
  color: #8d9692;
  opacity: .45;
  pointer-events: none;
}
.activation strong { font-size: 20px; line-height: 24px; font-weight: 400; }

/* Application status */
.statusbar {
  display: grid;
  grid-template-columns: 143px 246px 104px 233px 1fr 71px;
  align-items: center;
  height: 31px;
  padding-top: 2px;
  border-top: 3px solid #fff;
  border-bottom: 2px solid #9c9c9c;
  background: #f1f2f1;
  color: #555;
  white-space: nowrap;
}
.today { padding-left: 9px; font-size: 13px; }
.social { display: grid; grid-template-columns: repeat(9, 27px); justify-items: center; align-items: center; border-left: 1px solid #aaa; color: #222; }
.social svg { width: 18px; height: 18px; }
.social .cap { width: 26px; height: 20px; }
.at { font-size: 16px; }
.brand { font-family: "Open Sans", sans-serif; color: #111; text-decoration: underline; }
.version, .company, .license { border-left: 1px solid #999; line-height: 20px; padding-left: 3px; }
.company { padding-right: 3px; text-align: center; }
```
